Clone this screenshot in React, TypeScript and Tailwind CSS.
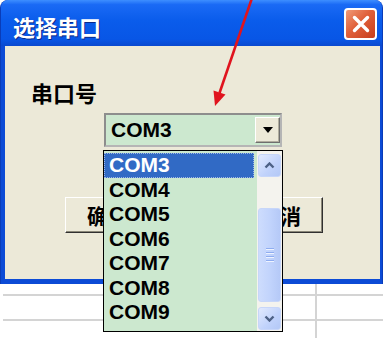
import React from "react";

const ports = ["COM3", "COM4", "COM5", "COM6", "COM7", "COM8", "COM9"];

const Chevron = ({ up }: { up?: boolean }) => (
  <svg width="11" height="7" viewBox="0 0 11 7">
    <path
      d={up ? "M1.5 5.5 L5.5 1.5 L9.5 5.5" : "M1.5 1.5 L5.5 5.5 L9.5 1.5"}
      fill="none"
      stroke="#4d6185"
      strokeWidth="2.4"
    />
  </svg>
);

const ScrollButton = ({ up }: { up?: boolean }) => (
  <div className="mx-[1px] h-[23px] rounded-[3px] border border-[#c7d6f9] bg-[linear-gradient(135deg,#e2eafe,#c0d2fb_60%,#b3c8f6)] flex items-center justify-center">
    <Chevron up={up} />
  </div>
);

export default function App() {
  return (
    <div className="relative w-[385px] h-[338px] overflow-hidden bg-white font-['Noto_Sans_CJK_SC',sans-serif]">
      {/* window */}
      <div className="w-[383px] h-[284px] rounded-t-[8px] bg-[#0c4bd6] border-l border-r border-[#0a3cb8] flex flex-col">
        {/* title bar */}
        <div className="h-[46px] rounded-t-[7px] bg-[linear-gradient(to_bottom,#3d8eff_0%,#1a6af5_10%,#0a5ceb_45%,#0856e6_85%,#0a49cf_100%)] flex justify-between pl-[12px] pr-[5px]">
          <div className="mt-[15px] text-[22px] leading-[22px] font-bold text-white [text-shadow:1px_1px_0_#0a2a8a]">
            选择串口
          </div>
          <div className="mt-[8px] w-[33px] h-[32px] rounded-[4px] border-2 border-white bg-[linear-gradient(135deg,#f09a78,#e0603a_45%,#c83e1c)] flex items-center justify-center">
            <svg width="18" height="18" viewBox="0 0 18 18">
              <path d="M2.5 2.5 L15.5 15.5 M15.5 2.5 L2.5 15.5" stroke="#fff" strokeWidth="3.4" strokeLinecap="round" />
            </svg>
          </div>
        </div>

        {/* client area */}
        <div className="flex-1 ml-[4px] mr-[2px] mb-[5px] bg-[#ece9d8] flex flex-col">
          <div className="mt-[35px] ml-[26px] text-[22px] leading-[22px] font-bold text-black">串口号</div>

          <div className="mt-[10px] ml-[99px] w-[178px] h-[34px] border-2 border-t-[#8d8d8d] border-l-[#8d8d8d] border-b-[#b5b5b5] border-r-[#b5b5b5] bg-[#cce8cf] flex items-center">
            <span className="flex-1 pl-[5px] text-[21px] leading-[24px] font-bold text-black font-['Liberation_Sans',sans-serif]">
              COM3
            </span>
            <div className="w-[25px] h-[26px] bg-[#ece9d8] border border-t-white border-l-white border-b-[#6e6e6e] border-r-[#6e6e6e] shadow-[inset_-1px_-1px_0_#b0ad9e] flex items-center justify-center">
              <svg width="10" height="6" viewBox="0 0 10 6">
                <path d="M0 0 H10 L5 6 Z" fill="#000" />
              </svg>
            </div>
          </div>

          <div className="mt-[50px] ml-[60px] flex gap-[86px]">
            {["确定", "取消"].map((t) => (
              <div
                key={t}
                className="w-[86px] h-[36px] bg-[#ece9d8] border border-t-white border-l-white border-b-[#303030] border-r-[#303030] shadow-[inset_-1px_-1px_0_#8a8778] flex items-center justify-center text-[21px] leading-[21px] font-bold text-black"
              >
                {t}
              </div>
            ))}
          </div>
        </div>
      </div>

      {/* sheet grid below */}
      <div className="flex h-[54px]">
        <div className="w-[317px] border-r-2 border-[#d4d4d4] pl-[3px]">
          <div className="h-[12px] border-b-2 border-[#d4d4d4]" />
          <div className="h-[25px] border-b-2 border-[#d4d4d4]" />
        </div>
        <div className="w-[66px]">
          <div className="h-[12px] border-b-2 border-[#d4d4d4]" />
          <div className="h-[25px] border-b-2 border-[#d4d4d4]" />
        </div>
      </div>

      {/* open drop-down list */}
      <div className="absolute left-[103px] top-[150px] w-[180px] h-[182px] border border-black bg-[#cce8cf] flex font-['Liberation_Sans',sans-serif]">
        <div className="flex-1 pt-[2px] pr-[3px]">
          {ports.map((p, i) => (
            <div
              key={p}
              className={
                i === 0
                  ? "h-[24.5px] leading-[24.5px] pl-[5px] text-[21px] font-bold bg-[#316ac5] text-white outline-1 outline-dotted -outline-offset-1 outline-[#9fb6e6]"
                  : "h-[24.5px] leading-[24.5px] pl-[5px] text-[21px] font-bold text-black"
              }
            >
              {p}
            </div>
          ))}
        </div>
        <div className="w-[25px] bg-[#f4f3ee] pt-[3px] flex flex-col">
          <ScrollButton up />
          <div className="h-[31px]" />
          <div className="mx-[1px] h-[94px] rounded-[3px] border border-[#c7d6f9] bg-[linear-gradient(to_right,#cddcfd,#c2d4fc_50%,#b5c9f7)] flex flex-col items-center justify-center gap-[2px]">
            {[0, 1, 2, 3].map((k) => (
              <div key={k} className="w-[8px] h-[2px] border-t border-[#8fadf0] border-b border-b-[#eef3ff]" />
            ))}
          </div>
          <div className="h-[5px]" />
          <ScrollButton />
        </div>
      </div>

      {/* red annotation arrow */}
      <svg className="absolute inset-0 pointer-events-none" width="385" height="338" viewBox="0 0 385 338">
        <line x1="252" y1="-2" x2="219.5" y2="93" stroke="#e0141e" strokeWidth="2.6" />
        <polygon points="215,106 213.5,90.5 225.5,94.5" fill="#e0141e" />
      </svg>
    </div>
  );
}
